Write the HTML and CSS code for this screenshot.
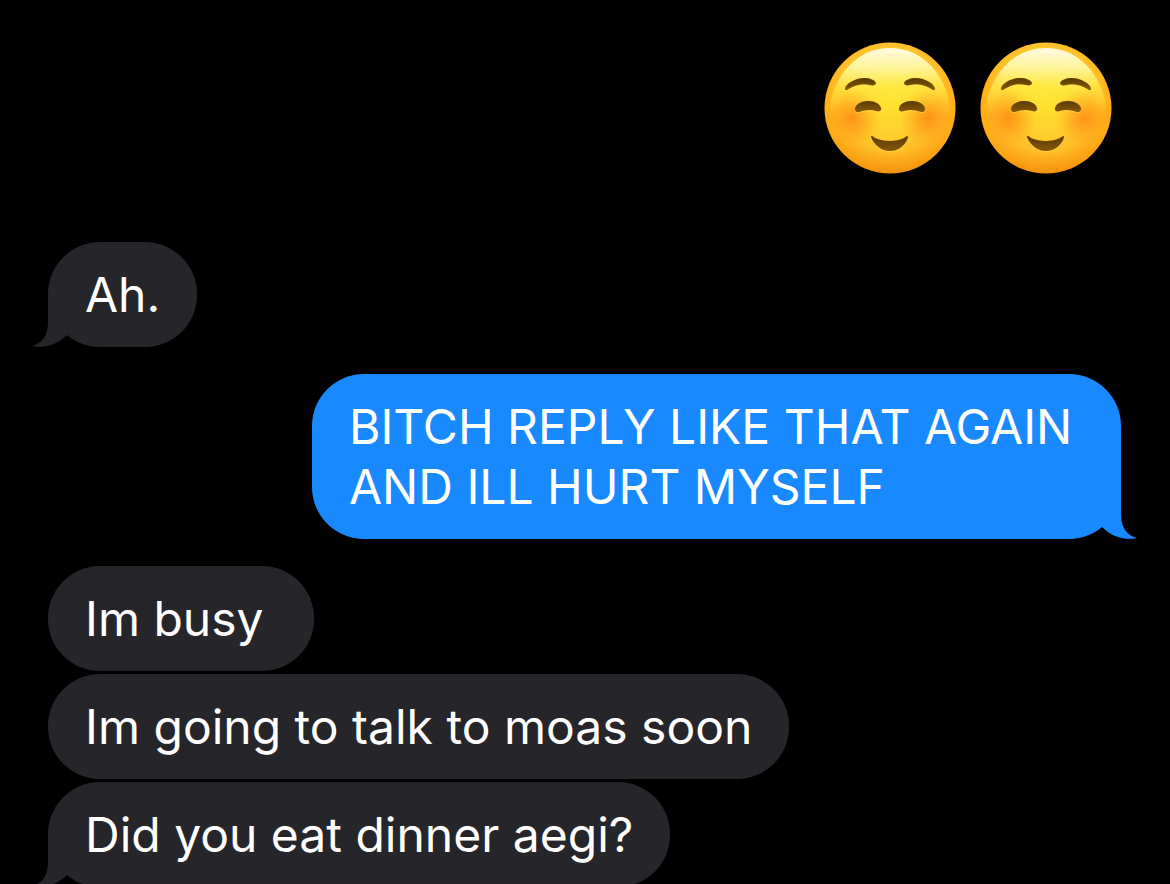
FILE: index.html
```html
<!DOCTYPE html>
<html lang="en">
<head>
<meta charset="utf-8">
<meta name="viewport" content="width=device-width, initial-scale=1">
<title>Messages</title>
<link rel="stylesheet" href="styles.css">
</head>
<body>
<svg class="defs" aria-hidden="true">
  <defs>
    <linearGradient id="rim" x1="0" y1="0" x2="0" y2="1">
      <stop offset="0" stop-color="#ffb824"/>
      <stop offset="0.35" stop-color="#ffa80c"/>
      <stop offset="0.7" stop-color="#ffac18"/>
      <stop offset="1" stop-color="#f3920f"/>
    </linearGradient>
    <radialGradient id="face" cx="0.5" cy="0.42" r="0.58">
      <stop offset="0" stop-color="#ffe22c"/>
      <stop offset="0.4" stop-color="#ffd42f"/>
      <stop offset="0.72" stop-color="#ffc22b" stop-opacity="0.9"/>
      <stop offset="1" stop-color="#ffad18" stop-opacity="0"/>
    </radialGradient>
    <linearGradient id="shine" x1="0" y1="0" x2="0" y2="1">
      <stop offset="0" stop-color="#fffbe2"/>
      <stop offset="0.25" stop-color="#fff9a8" stop-opacity="0.9"/>
      <stop offset="0.5" stop-color="#fff04c" stop-opacity="0.65"/>
      <stop offset="0.9" stop-color="#ffe52d" stop-opacity="0"/>
    </linearGradient>
    <radialGradient id="blush">
      <stop offset="0" stop-color="#ff8210" stop-opacity="0.75"/>
      <stop offset="0.4" stop-color="#ff8c14" stop-opacity="0.5"/>
      <stop offset="1" stop-color="#ff9d18" stop-opacity="0"/>
    </radialGradient>
    <linearGradient id="ink" x1="0" y1="0" x2="0" y2="1">
      <stop offset="0" stop-color="#5a3a04"/>
      <stop offset="1" stop-color="#86590a"/>
    </linearGradient>
    <g id="features">
      <path d="M21 47C21 42 31 36 40 36C46 36 51 38 52 41C52 43 49 44 46 43C37 41 31 43 23 48C22 48 21 48 21 47Z"/>
      <path d="M111 47C111 42 101 36 92 36C86 36 81 38 80 41C80 43 83 44 86 43C95 41 101 43 109 48C110 48 111 48 111 47Z"/>
      <path d="M35 70C31 71 30 67 32 64C35 60 40 59 45 59C51 59 56 62 57 66C58 69 55 70 52 69C46 67 41 68 35 70Z"/>
      <path d="M97 70C101 71 102 67 100 64C97 60 92 59 87 59C81 59 76 62 75 66C74 69 77 70 80 69C86 67 91 68 97 70Z"/>
      <path d="M47 95C47 93 49 94 51 96C60 100 72 100 80 96C83 94 84 93 84 95C83 101 76 109 66 109C56 109 49 101 47 95Z"/>
    </g>
    <symbol id="smile" viewBox="0 0 132 132">
      <circle cx="66" cy="66" r="65.5" fill="url(#rim)"/>
      <circle cx="66" cy="66" r="65" fill="url(#face)"/>
      <path d="M66 6C98 6 122 32 126 66C118 90 14 90 6 66C10 32 34 6 66 6Z" fill="url(#shine)"/>
      <circle cx="28" cy="76" r="29" fill="url(#blush)"/>
      <circle cx="104" cy="76" r="29" fill="url(#blush)"/>
      <use href="#features" y="1" fill="#ffdf46" opacity="0.7"/>
      <use href="#features" fill="url(#ink)"/>
    </symbol>
    <symbol id="tail" viewBox="0 0 52 52">
      <path d="M16 0V27C16 40 11 48 0 51C13 54 26 49 35 40L52 0Z"/>
    </symbol>
  </defs>
</svg>
<main class="thread">
  <div class="group group-sent emoji-row">
    <svg class="emoji" role="img" aria-label="Smiling face"><use href="#smile"/></svg>
    <svg class="emoji" role="img" aria-label="Smiling face"><use href="#smile"/></svg>
  </div>
  <div class="group">
    <p class="bubble">Ah.<svg class="tail" aria-hidden="true"><use href="#tail"/></svg></p>
  </div>
  <div class="group group-sent">
    <p class="bubble bubble-sent">BITCH REPLY LIKE THAT AGAIN AND ILL HURT MYSELF<svg class="tail" aria-hidden="true"><use href="#tail"/></svg></p>
  </div>
  <div class="group">
    <p class="bubble">Im busy&nbsp;</p>
    <p class="bubble">Im going to talk to moas soon</p>
    <p class="bubble">Did you eat dinner aegi?<svg class="tail" aria-hidden="true"><use href="#tail"/></svg></p>
  </div>
</main>
</body>
</html>
```

FILE: styles.css
```css
* {
  box-sizing: border-box;
}

body {
  margin: 0;
  background: #000;
  color: #fff;
  font-family: Inter, "Liberation Sans", sans-serif;
  font-size: 48px;
  line-height: 60px;
}

.defs {
  position: absolute;
  width: 0;
  height: 0;
}

.thread {
  display: flex;
  flex-direction: column;
  gap: 27px;
  height: 100vh;
  padding: 42px 49px 0 48px;
  overflow-y: auto;
  scrollbar-width: none;
}

.group {
  display: flex;
  flex-direction: column;
  flex-shrink: 0;
  align-items: flex-start;
  gap: 3px;
}

.group-sent {
  align-items: flex-end;
}

.emoji-row {
  flex-direction: row;
  justify-content: flex-end;
  gap: 24px;
  padding: 0 9px 41px 0;
}

.emoji {
  width: 132px;
  height: 132px;
}

.bubble {
  position: relative;
  max-width: 809px;
  margin: 0;
  padding: 23px 37px 22px;
  border-radius: 52px;
  background: #26252a;
}

.bubble-sent {
  background: #1989ff;
}

.tail {
  position: absolute;
  bottom: 0;
  left: -16px;
  width: 52px;
  height: 52px;
  fill: #26252a;
}

.bubble-sent .tail {
  right: -16px;
  left: auto;
  fill: #1989ff;
  transform: scaleX(-1);
}
```
